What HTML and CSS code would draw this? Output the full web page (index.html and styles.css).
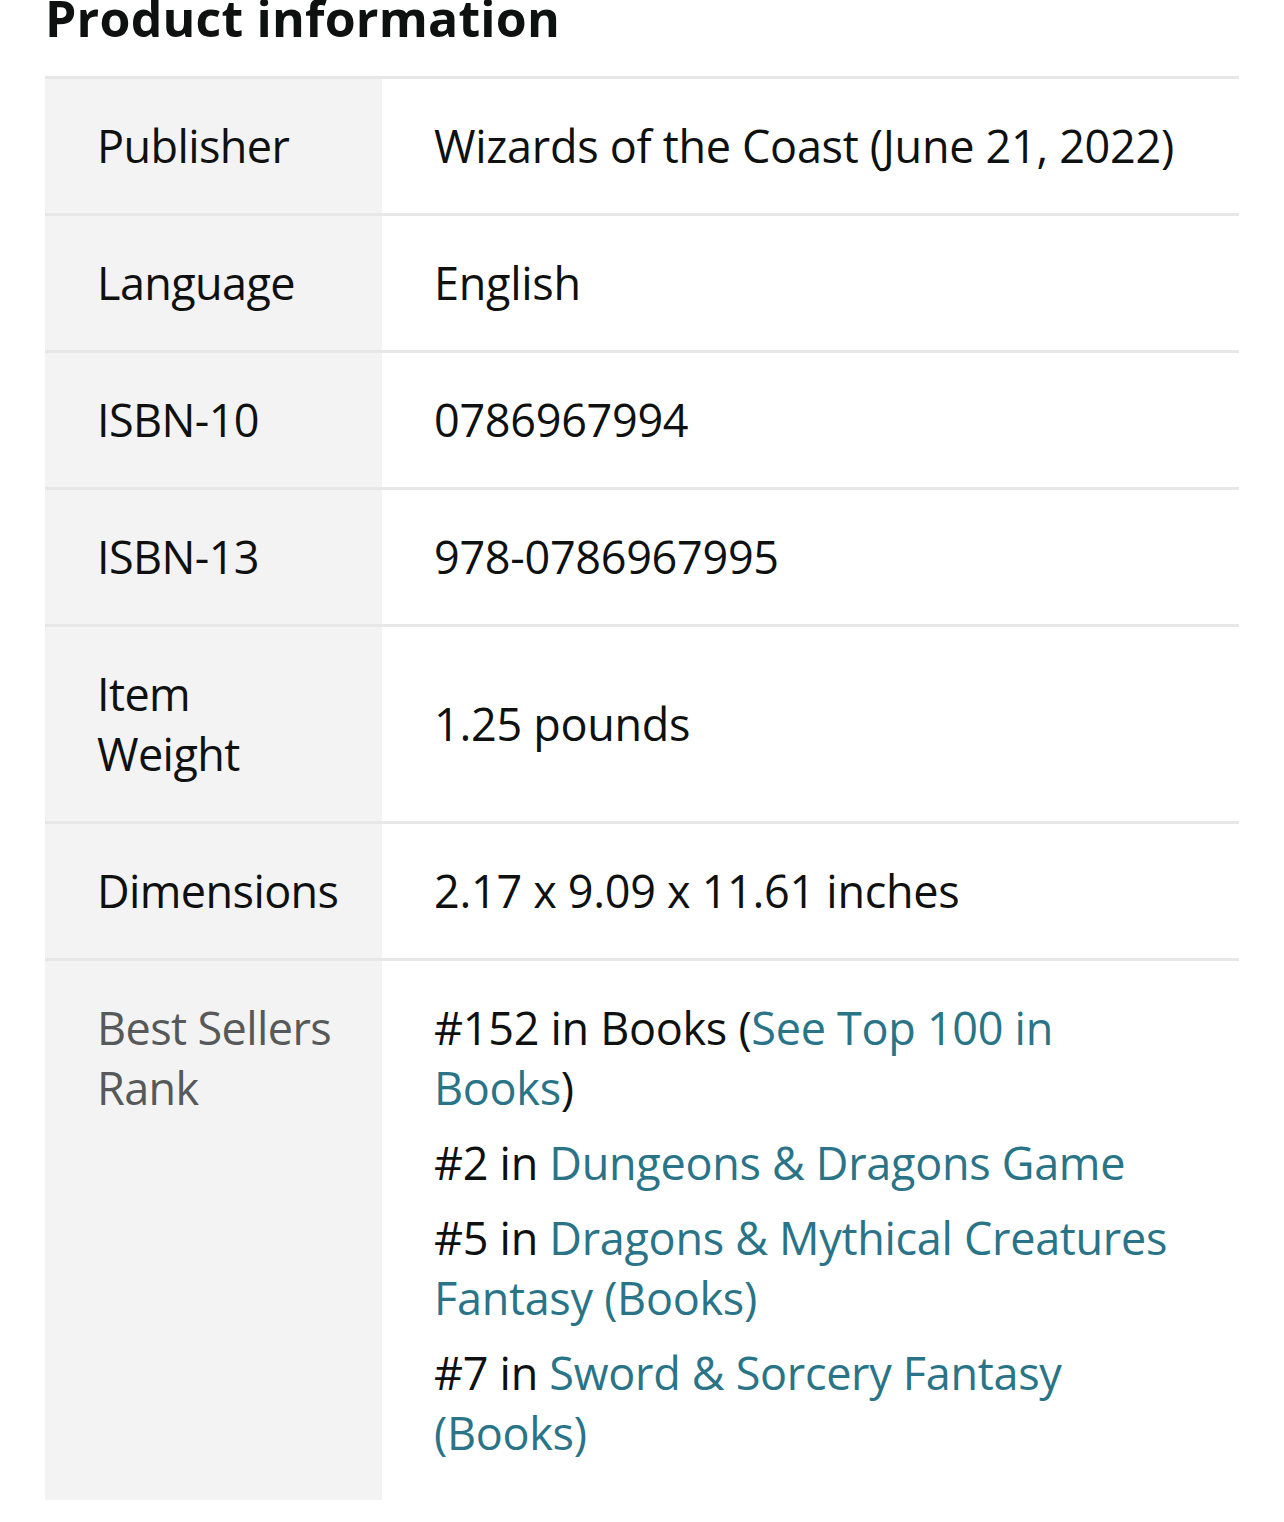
FILE: index.html
```html
<!DOCTYPE html>
<html lang="en">
<head>
  <meta charset="UTF-8">
  <title>Product information</title>
  <link rel="stylesheet" href="styles.css">
</head>
<body>

  <section class="product-info">
    <h2>Product information</h2>

    <table class="details">
      <tr>
        <th>Publisher</th>
        <td>Wizards of the Coast (June 21, 2022)</td>
      </tr>
      <tr>
        <th>Language</th>
        <td>English</td>
      </tr>
      <tr>
        <th>ISBN-10</th>
        <td>0786967994</td>
      </tr>
      <tr>
        <th>ISBN-13</th>
        <td>978-0786967995</td>
      </tr>
      <tr>
        <th>Item Weight</th>
        <td>1.25 pounds</td>
      </tr>
      <tr>
        <th>Dimensions</th>
        <td>2.17 x 9.09 x 11.61 inches</td>
      </tr>
      <tr class="rank">
        <th>Best Sellers Rank</th>
        <td>
          <ul class="rank-list">
            <li>#152 in Books (<a href="#">See Top 100 in Books</a>)</li>
            <li>#2 in <a href="#">Dungeons &amp; Dragons Game</a></li>
            <li>#5 in <a href="#">Dragons &amp; Mythical Creatures Fantasy (Books)</a></li>
            <li>#7 in <a href="#">Sword &amp; Sorcery Fantasy (Books)</a></li>
          </ul>
        </td>
      </tr>
    </table>
  </section>

</body>
</html>
```

FILE: styles.css
```css
body {
  font-family: 'Open Sans', 'Noto Sans', sans-serif;
  background-color: #fff;
  color: #0f1111;
  margin: 0;
  padding: 0;
}

.product-info {
  padding: 0 45px;
}

.product-info h2 {
  font-size: 50px;
  font-weight: bold;
  line-height: 50px;
  letter-spacing: 0.2px;
  margin: -7px 0 33px 0;
}

.details {
  width: 100%;
  table-layout: fixed;
  border-collapse: separate;
  border-spacing: 0;
  font-size: 45px;
  line-height: 60px;
  letter-spacing: -0.3px;
}

.details th,
.details td {
  border-top: 3px solid #e7e7e7;
  padding: 37px 52px 37px;
  text-align: left;
  vertical-align: middle;
}

.details th {
  box-sizing: border-box;
  width: 337px;
  padding-right: 44px;
  background-color: #f3f3f3;
  font-weight: normal;
  letter-spacing: -0.6px;
}

.details .rank th,
.details .rank td {
  vertical-align: top;
}

.details .rank th {
  color: #565959;
}

.rank-list {
  list-style: none;
  margin: 0;
  padding: 0;
}

.rank-list li {
  margin-bottom: 15px;
}

.rank-list li:last-child {
  margin-bottom: 0;
}

.rank-list a {
  color: #2a7488;
  text-decoration: none;
}
```
